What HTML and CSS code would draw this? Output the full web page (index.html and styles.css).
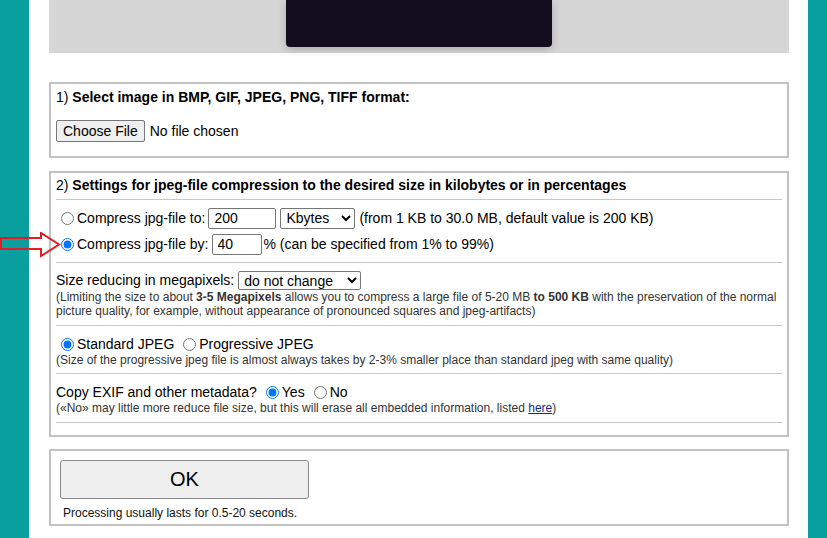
FILE: index.html
```html
<!DOCTYPE html>
<html lang="en">
<head>
<meta charset="utf-8">
<title>Compress JPEG</title>
<link rel="stylesheet" href="styles.css">
</head>
<body>
<svg class="arrow" width="62" height="26" viewBox="0 0 62 26" aria-hidden="true">
  <polygon points="1,6 41,6 41,1 59,12.5 41,24 41,17 1,17" fill="none" stroke="#e31b23" stroke-width="2" stroke-linejoin="miter"/>
</svg>
<div class="page">
  <div class="preview"><div class="thumb"></div></div>

  <div class="box box1">
    <div class="head">1) <b>Select image in BMP, GIF, JPEG, PNG, TIFF format:</b></div>
    <div class="file-row"><input type="file" class="file"></div>
  </div>

  <div class="box box2">
    <div class="head">2) <b>Settings for jpeg-file compression to the desired size in kilobytes or in percentages</b></div>
    <div class="sep s0"></div>
    <div class="group g1">
      <div class="row r22">
        <input type="radio" name="mode" class="radio">
        <span>Compress jpg-file to:</span>
        <input type="text" class="txt w-kb" value="200">
        <select class="sel sel-kb"><option>Kbytes</option></select>
        <span class="after">(from 1 KB to 30.0 MB, default value is 200 KB)</span>
      </div>
      <div class="row r22 second">
        <input type="radio" name="mode" class="radio" checked>
        <span>Compress jpg-file by:</span>
        <input type="text" class="txt w-pc" value="40">
        <span class="pct">% (can be specified from 1% to 99%)</span>
      </div>
    </div>
    <div class="sep s1"></div>
    <div class="group g2">
      <div class="row r20">
        <span>Size reducing in megapixels:</span>
        <select class="sel sel-mp"><option>do not change</option></select>
      </div>
      <div class="note">(Limiting the size to about <b>3-5 Megapixels</b> allows you to compress a large file of 5-20 MB <b>to 500 KB</b> with the preservation of the normal picture quality, for example, without appearance of pronounced squares and jpeg-artifacts)</div>
    </div>
    <div class="sep s2"></div>
    <div class="group g3">
      <div class="row r18">
        <input type="radio" name="type" class="radio" checked>
        <span>Standard JPEG</span>
        <input type="radio" name="type" class="radio gap">
        <span>Progressive JPEG</span>
      </div>
      <div class="note">(Size of the progressive jpeg file is almost always takes by 2-3% smaller place than standard jpeg with same quality)</div>
    </div>
    <div class="sep s3"></div>
    <div class="group g4">
      <div class="row r18 exif">
        <span>Copy EXIF and other metadata?</span>
        <input type="radio" name="exif" class="radio gap" checked>
        <span>Yes</span>
        <input type="radio" name="exif" class="radio gap">
        <span>No</span>
      </div>
      <div class="note">(«No» may little more reduce file size, but this will erase all embedded information, listed <a href="#" class="link">here</a>)</div>
    </div>
    <div class="sep s4"></div>
  </div>

  <div class="box box3">
    <button type="button" class="ok">OK</button>
    <div class="proc">Processing usually lasts for 0.5-20 seconds.</div>
  </div>
</div>
</body>
</html>
```

FILE: styles.css
```css
html, body {
  margin: 0;
  padding: 0;
}
body {
  background: #0a9f9f;
  font-family: "Liberation Sans", Arial, sans-serif;
  font-size: 14px;
  color: #000;
  height: 538px;
  overflow: hidden;
}
.arrow {
  position: absolute;
  left: 0;
  top: 232px;
}
.page {
  margin-left: 29px;
  width: 779px;
  box-sizing: border-box;
  padding: 0 19px 0 20px;
  background: #fff;
  height: 538px;
}
.preview {
  height: 53px;
  background: #d6d6d6;
  display: flex;
}
.thumb {
  margin-left: 237px;
  width: 266px;
  height: 47px;
  background: #110c1e;
  border-radius: 0 0 4px 4px;
  box-shadow: 0 2px 10px rgba(0, 0, 0, 0.22);
}
.box {
  border: 2px solid #c2c2c2;
  margin-top: 13px;
  padding: 0 5px;
}
.box1 {
  margin-top: 29px;
  padding-top: 4px;
  padding-bottom: 14px;
}
.head {
  line-height: 18px;
  height: 18px;
}
.file-row {
  margin-top: 14px;
  height: 22px;
  display: flex;
  align-items: center;
}
.file {
  font-family: "Liberation Sans", Arial, sans-serif;
  font-size: 14px;
  color: #000;
}
.file::file-selector-button {
  font-family: "Liberation Sans", Arial, sans-serif;
  font-size: 14px;
  height: 22px;
  padding: 0 6px;
  margin-right: 5px;
  border: 1px solid #767676;
  border-radius: 2px;
  background: #efefef;
  color: #000;
}
.box2 {
  padding-top: 3px;
  padding-bottom: 12px;
}
.sep {
  border-top: 1px solid #c8c8c8;
}
.s0 { margin-top: 5px; }
.s1 { margin-top: 7px; }
.s2 { margin-top: 7px; }
.s3 { margin-top: 6px; }
.s4 { margin-top: 7px; }
.g1 { margin-top: 7px; }
.g2 { margin-top: 7px; }
.g3 { margin-top: 9px; }
.g4 { margin-top: 9px; }
.row {
  display: flex;
  align-items: center;
  white-space: nowrap;
}
.r22 { height: 22px; }
.r20 { height: 20px; }
.r18 { height: 18px; }
.second { margin-top: 4px; }
.radio {
  width: 13px;
  height: 13px;
  margin: 0 3px 0 5px;
  flex: none;
}
.radio.gap { margin-left: 9px; }
.txt {
  font-family: "Liberation Sans", Arial, sans-serif;
  font-size: 14px;
  box-sizing: border-box;
  height: 21px;
  border: 1px solid #767676;
  border-radius: 2px;
  padding: 0 5px;
  color: #000;
  background: #fff;
}
.w-kb { width: 68px; margin-left: 3px; }
.w-pc { width: 50px; margin-left: 3px; }
.sel {
  font-family: "Liberation Sans", Arial, sans-serif;
  font-size: 14px;
  box-sizing: border-box;
  border: 1px solid #767676;
  border-radius: 2px;
  background: #fff;
  color: #000;
  padding: 0 1px;
}
.sel-kb { width: 75px; height: 21px; margin-left: 4px; }
.sel-mp { width: 123px; height: 19px; margin-left: 4px; }
.after { margin-left: 4px; }
.pct { margin-left: 2px; }
.note {
  font-size: 12px;
  line-height: 14px;
  color: #333;
}
.link {
  color: #0b2a8a;
  text-decoration: underline;
}
.box3 {
  margin-top: 12px;
  padding: 9px 9px 4px 9px;
}
.ok {
  display: block;
  width: 249px;
  height: 39px;
  font-family: "Liberation Sans", Arial, sans-serif;
  font-size: 20px;
  color: #000;
  background: #efefef;
  border: 1px solid #8a8a8a;
  border-radius: 3px;
  padding: 0;
}
.proc {
  margin-top: 7px;
  margin-left: 3px;
  font-size: 12px;
  line-height: 14px;
  color: #111;
}
```
